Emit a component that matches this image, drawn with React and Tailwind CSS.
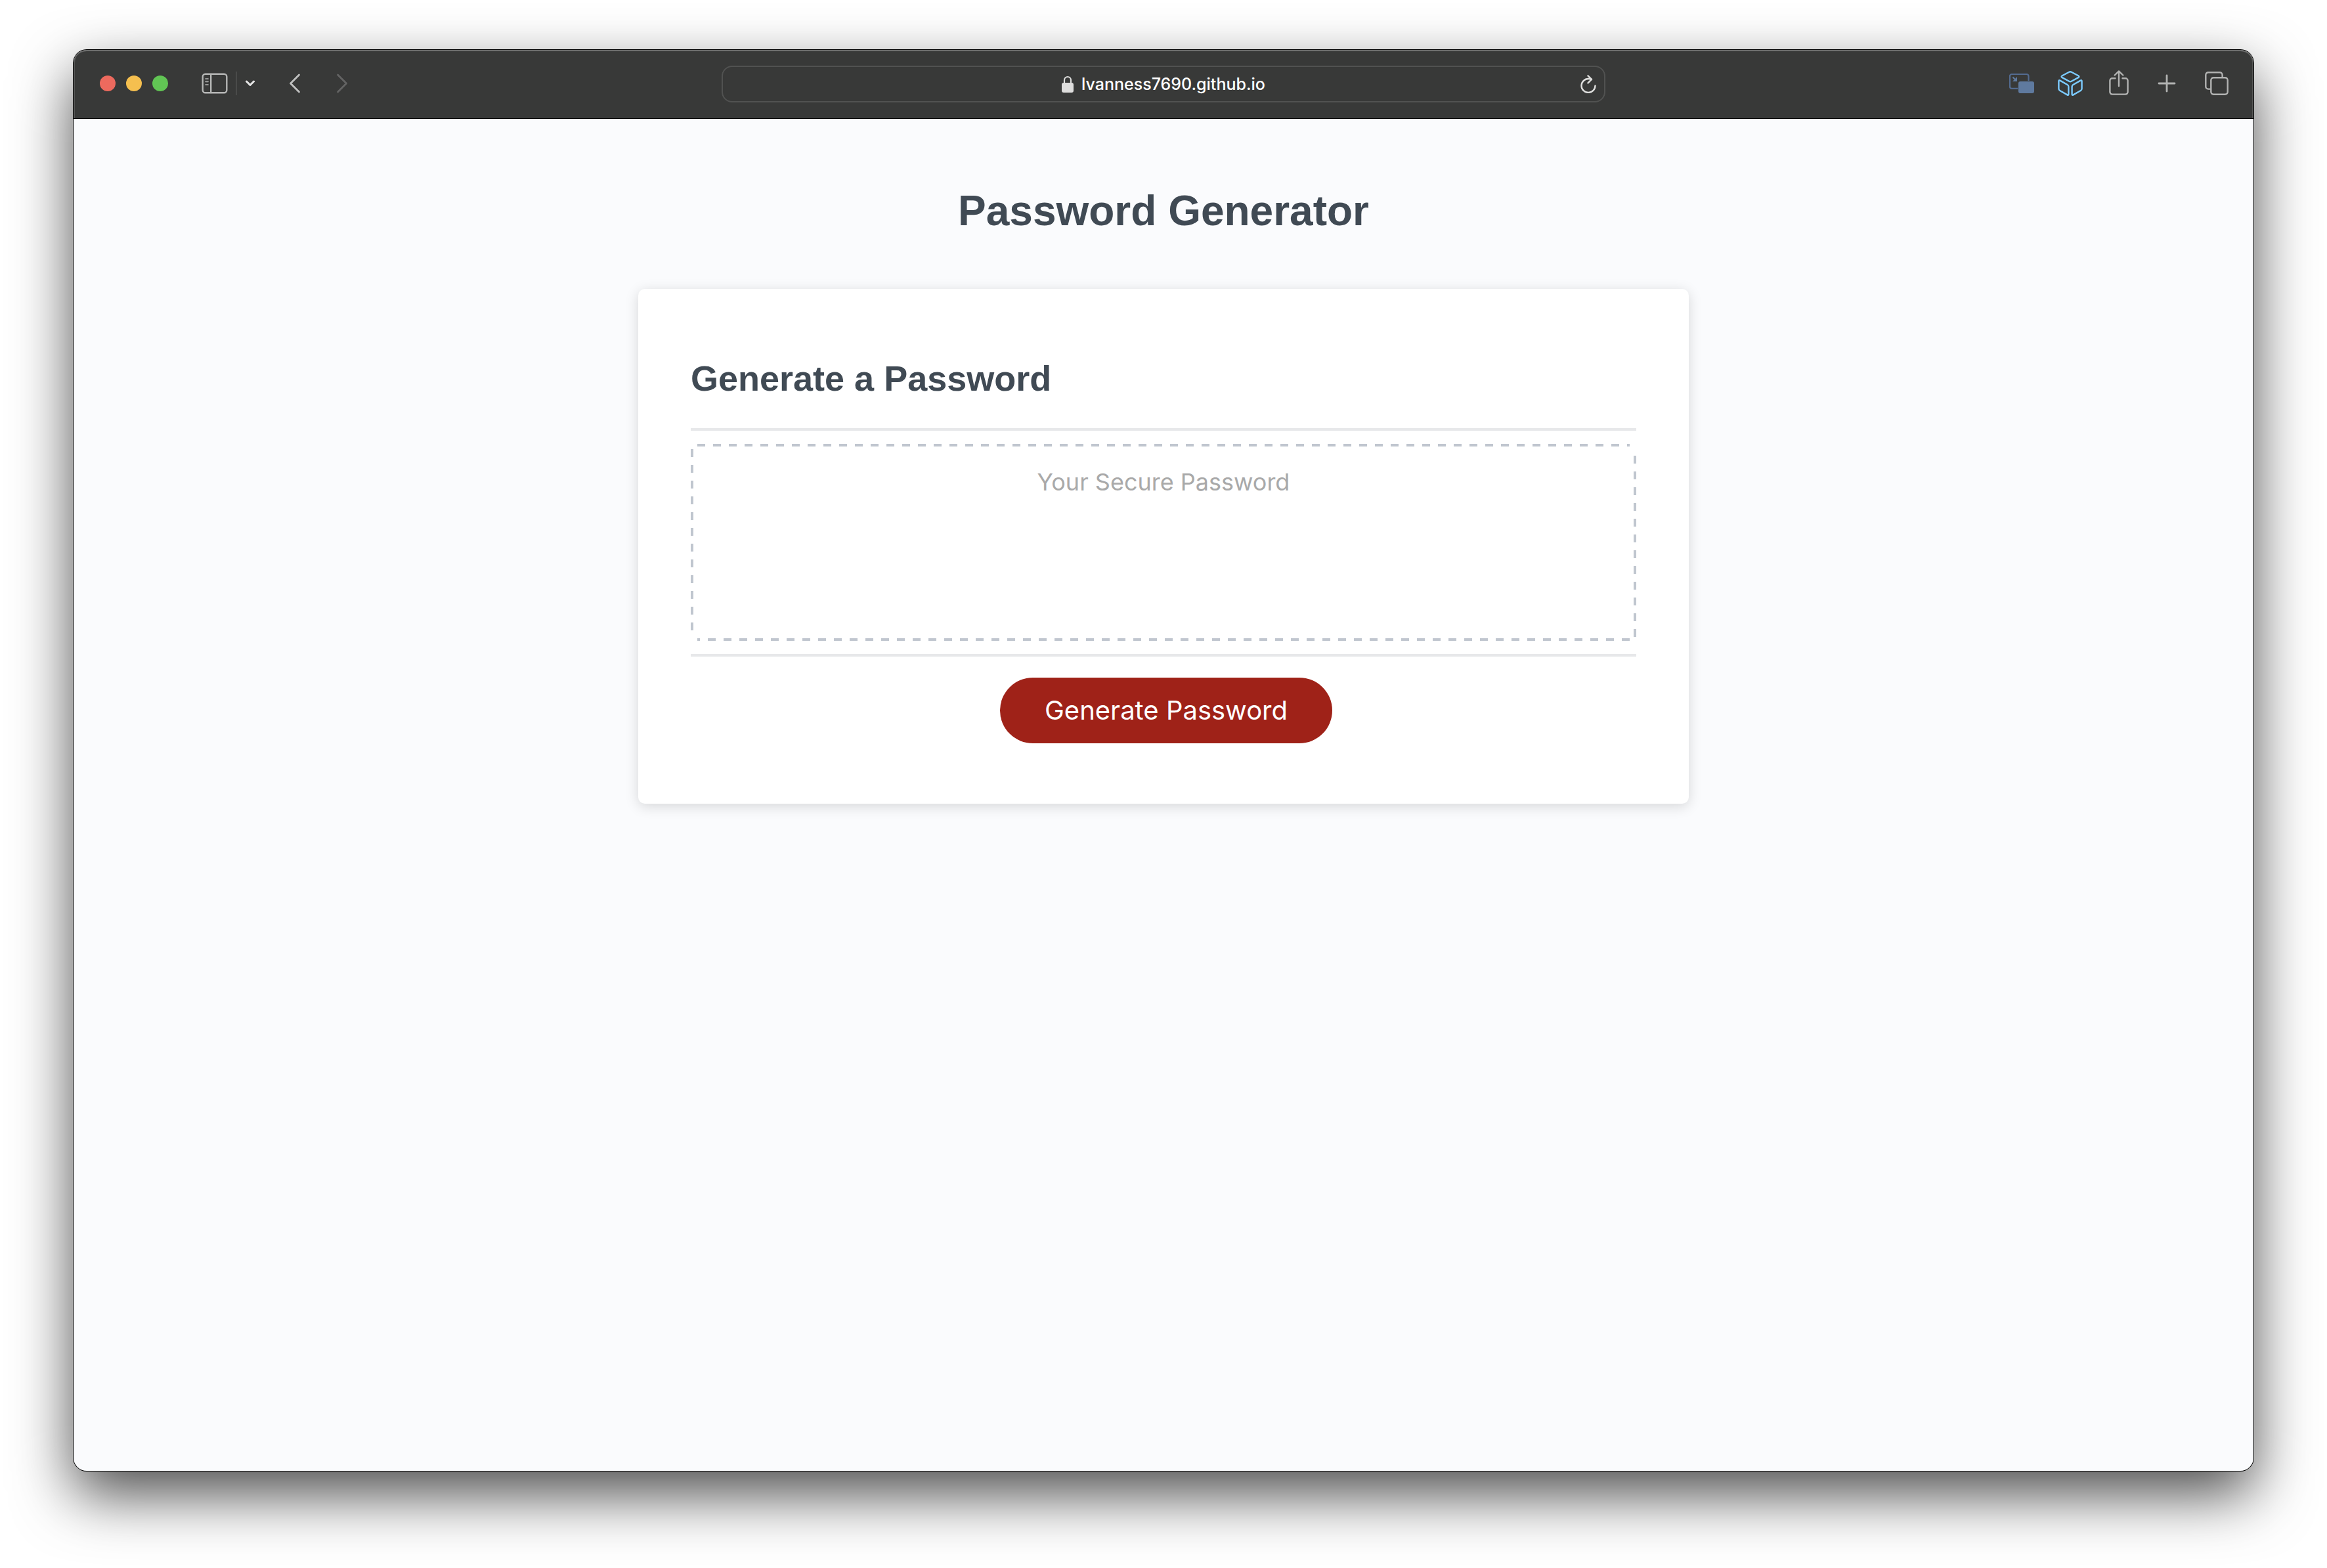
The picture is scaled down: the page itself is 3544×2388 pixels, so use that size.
function SidebarIcon() {
  return (
    <svg width="40" height="32" viewBox="0 0 40 32" fill="none" stroke="#b5b6b5" strokeWidth="2.4" strokeLinecap="round" aria-hidden="true">
      <rect x="1.7" y="1.7" width="36.6" height="28.6" rx="4" />
      <path d="M14.2 2v28" />
      <path d="M6 9h4M6 13.500h4M6 18h4" strokeWidth="1.600" />
    </svg>
  );
}

function ChevronDown() {
  return (
    <svg width="16" height="10" viewBox="0 0 16 10" fill="none" stroke="#e6e6e6" strokeWidth="3" strokeLinecap="round" strokeLinejoin="round" aria-hidden="true">
      <path d="M2.500 2l5.500 5.500L13.500 2" />
    </svg>
  );
}

function BackIcon() {
  return (
    <svg width="18" height="30" viewBox="0 0 18 30" fill="none" stroke="#c0c1c0" strokeWidth="2.800" strokeLinecap="round" strokeLinejoin="round" aria-hidden="true">
      <path d="M15.500 2L2.500 15l13 13" />
    </svg>
  );
}

function ForwardIcon() {
  return (
    <svg width="18" height="30" viewBox="0 0 18 30" fill="none" stroke="#636463" strokeWidth="2.800" strokeLinecap="round" strokeLinejoin="round" aria-hidden="true">
      <path d="M2.500 2l13 13-13 13" />
    </svg>
  );
}

function LockIcon() {
  return (
    <svg width="18" height="26" viewBox="0 0 18 26" fill="none" aria-hidden="true">
      <path d="M4 12V7a5 5 0 0 1 10 0v5" stroke="#dededd" strokeWidth="2.200" />
      <rect x="0" y="11" width="18" height="15" rx="3" fill="#dededd" />
    </svg>
  );
}

function ReloadIcon() {
  return (
    <svg width="24" height="28" viewBox="0 0 24 28" fill="none" stroke="#dededd" strokeWidth="2.400" strokeLinecap="round" strokeLinejoin="round" aria-hidden="true">
      <path d="M22.500 16.500A10.500 10.500 0 1 1 12 6c1.800 0 3.200.2 4.600.7" />
      <path d="M11.500 1.400L17 6.900 11.500 12.400" />
    </svg>
  );
}

function PictureIcon() {
  return (
    <svg width="38" height="30" viewBox="0 0 38 30" fill="none" aria-hidden="true">
      <path d="M13 22.800H4a3 3 0 0 1-3-3V4a3 3 0 0 1 3-3h22.500a3 3 0 0 1 3 3v7" stroke="#536b90" strokeWidth="2.200" />
      <path d="M5.500 5.500l5 5" stroke="#5f7a9f" strokeWidth="2.200" />
      <path d="M12 5v7H5z" fill="#5f7a9f" />
      <rect x="14" y="12" width="24" height="18" rx="3" fill="#5f7a9f" />
    </svg>
  );
}

function CubeIcon() {
  return (
    <svg width="38" height="38" viewBox="0 0 38 38" fill="none" stroke="#7ccbff" strokeWidth="2.400" strokeLinejoin="round" aria-hidden="true">
      <path d="M17.200 1.800L6.800 7.300q-2.400 1.400 0 2.800l10.400 5.700q1.800 1 3.600 0l10.400-5.700q2.400-1.400 0-2.800L20.800 1.800q-1.800-1-3.600 0z" />
      <path d="M1.400 15.800q0-2.300 2-1.200l11.200 6.400q1.800 1 1.800 3v11.200q0 2.300-2 1.200L3.200 30q-1.800-1-1.800-3z" />
      <path d="M36.600 15.800q0-2.300-2-1.200l-11.200 6.400q-1.800 1-1.800 3v11.200q0 2.300 2 1.200L34.800 30q1.800-1 1.800-3z" />
    </svg>
  );
}

function ShareIcon() {
  return (
    <svg width="30" height="38" viewBox="0 0 30 38" fill="none" stroke="#b2b3b2" strokeWidth="2.400" strokeLinecap="round" strokeLinejoin="round" aria-hidden="true">
      <path d="M9.500 12.200H5a3.600 3.600 0 0 0-3.600 3.600v17.200A3.600 3.600 0 0 0 5 36.600h20a3.600 3.600 0 0 0 3.600-3.600V15.800a3.600 3.600 0 0 0-3.600-3.600h-4.500" />
      <path d="M15 24V1.600M8.700 7.500L15 1.400l6.300 6.100" />
    </svg>
  );
}

function PlusIcon() {
  return (
    <svg width="28" height="28" viewBox="0 0 28 28" fill="none" stroke="#b2b3b2" strokeWidth="2.800" strokeLinecap="round" aria-hidden="true">
      <path d="M14 2v24M2 14h24" />
    </svg>
  );
}

function TabsIcon() {
  return (
    <svg width="36" height="36" viewBox="0 0 36 36" fill="none" stroke="#b2b3b2" strokeWidth="2.400" strokeLinejoin="round" aria-hidden="true">
      <path d="M9 26.600H5.200a3.900 3.900 0 0 1-3.900-3.900V5.200a3.900 3.900 0 0 1 3.900-3.900h17.500a3.900 3.900 0 0 1 3.900 3.900V8" />
      <rect x="9.300" y="9.300" width="25.400" height="25.400" rx="3.900" />
    </svg>
  );
}

function Toolbar() {
  return (
    <header className="grid h-[104px] grid-cols-[1fr_1346px_1fr] items-center rounded-t-[20px] bg-[#383938] shadow-[inset_0_2px_0_#6b6c6b,inset_2px_0_0_#565756,inset_-2px_0_0_#565756]">
      <div className="flex items-center pb-0.5 pl-10">
        <div className="flex gap-4">
          <button type="button" aria-label="Close" className="size-6 rounded-full bg-[#ed6a5e]" />
          <button type="button" aria-label="Minimize" className="size-6 rounded-full bg-[#f5bf4f]" />
          <button type="button" aria-label="Zoom" className="size-6 rounded-full bg-[#61c554]" />
        </div>
        <button type="button" aria-label="Sidebar" className="ml-[51px]"><SidebarIcon /></button>
        <span className="ml-3 h-9 w-[2px] bg-[#4a4b4a]" />
        <button type="button" aria-label="Tab groups" className="ml-3"><ChevronDown /></button>
        <button type="button" aria-label="Back" className="ml-[51px]"><BackIcon /></button>
        <button type="button" aria-label="Forward" className="ml-[54px]"><ForwardIcon /></button>
      </div>
      <div className="flex h-14 items-center rounded-2xl border-2 border-[#515251] px-3">
        <span className="w-6" />
        <div className="flex flex-1 items-center justify-center gap-3">
          <LockIcon />
          <span className="text-[25px] leading-8 font-medium text-white">lvanness7690.github.io</span>
        </div>
        <button type="button" aria-label="Reload"><ReloadIcon /></button>
      </div>
      <div className="flex items-center justify-end pr-[38px] pb-0.5">
        <button type="button" aria-label="Picture in picture"><PictureIcon /></button>
        <button type="button" aria-label="Extension" className="ml-9"><CubeIcon /></button>
        <button type="button" aria-label="Share" className="ml-10 pb-0.5"><ShareIcon /></button>
        <button type="button" aria-label="New tab" className="ml-11"><PlusIcon /></button>
        <button type="button" aria-label="Tab overview" className="ml-11"><TabsIcon /></button>
      </div>
    </header>
  );
}

export default function App() {
  return (
    <div className="flex min-h-screen bg-white px-28 pt-[76px] pb-[148px] font-['Inter',sans-serif]">
      <div className="flex flex-1 flex-col overflow-hidden rounded-[20px] bg-[#fafbfd] shadow-[0_0_0_1px_#000,0_36px_90px_rgba(0,0,0,0.7)]">
        <Toolbar />
        <main className="flex-1 border-t border-black">
          <h1 className="pt-[104px] text-center font-['Liberation_Sans',sans-serif] text-[64px] leading-[72px] font-bold text-[#404a54]">
            Password Generator
          </h1>
          <section className="mx-auto mt-[83px] w-full max-w-[1600px] rounded-[10px] bg-white px-20 pt-[100px] pb-[92px] shadow-[0_4px_20px_rgba(0,0,0,0.15)]">
            <h2 className="font-['Liberation_Sans',sans-serif] text-[54px] leading-[72px] font-bold text-[#404a54]">
              Generate a Password
            </h2>
            <div className="mt-10 border-y-4 border-[#e7e8ea] py-5">
              {/* Dashed frame: one 12px-on, 12px-off gradient per side. */}
              <textarea
                readOnly
                aria-label="Your Secure Password"
                placeholder="Your Secure Password"
                className="block h-[300px] w-full resize-none bg-transparent pt-9 text-center text-[36px] leading-[44px] placeholder:text-[#a9a9a9] [background-image:repeating-linear-gradient(90deg,#c0c6cf_0_12px,transparent_12px_24px),repeating-linear-gradient(270deg,#c0c6cf_0_12px,transparent_12px_24px),repeating-linear-gradient(180deg,#c0c6cf_0_12px,transparent_12px_24px),repeating-linear-gradient(0deg,#c0c6cf_0_12px,transparent_12px_24px)] [background-position:left_10px_top_0px,right_10px_bottom_0px,left_0px_top_8px,right_0px_bottom_6px] [background-repeat:no-repeat] [background-size:calc(100%_-_20px)_4px,calc(100%_-_20px)_4px,4px_calc(100%_-_16px),4px_calc(100%_-_14px)]"
              />
            </div>
            <div className="mt-8 flex justify-center pl-2">
              <button type="button" className="h-[100px] rounded-[50px] bg-[#9f2218] px-[68px] text-[40px] leading-[52px] text-white">
                Generate Password
              </button>
            </div>
          </section>
        </main>
      </div>
    </div>
  );
}
